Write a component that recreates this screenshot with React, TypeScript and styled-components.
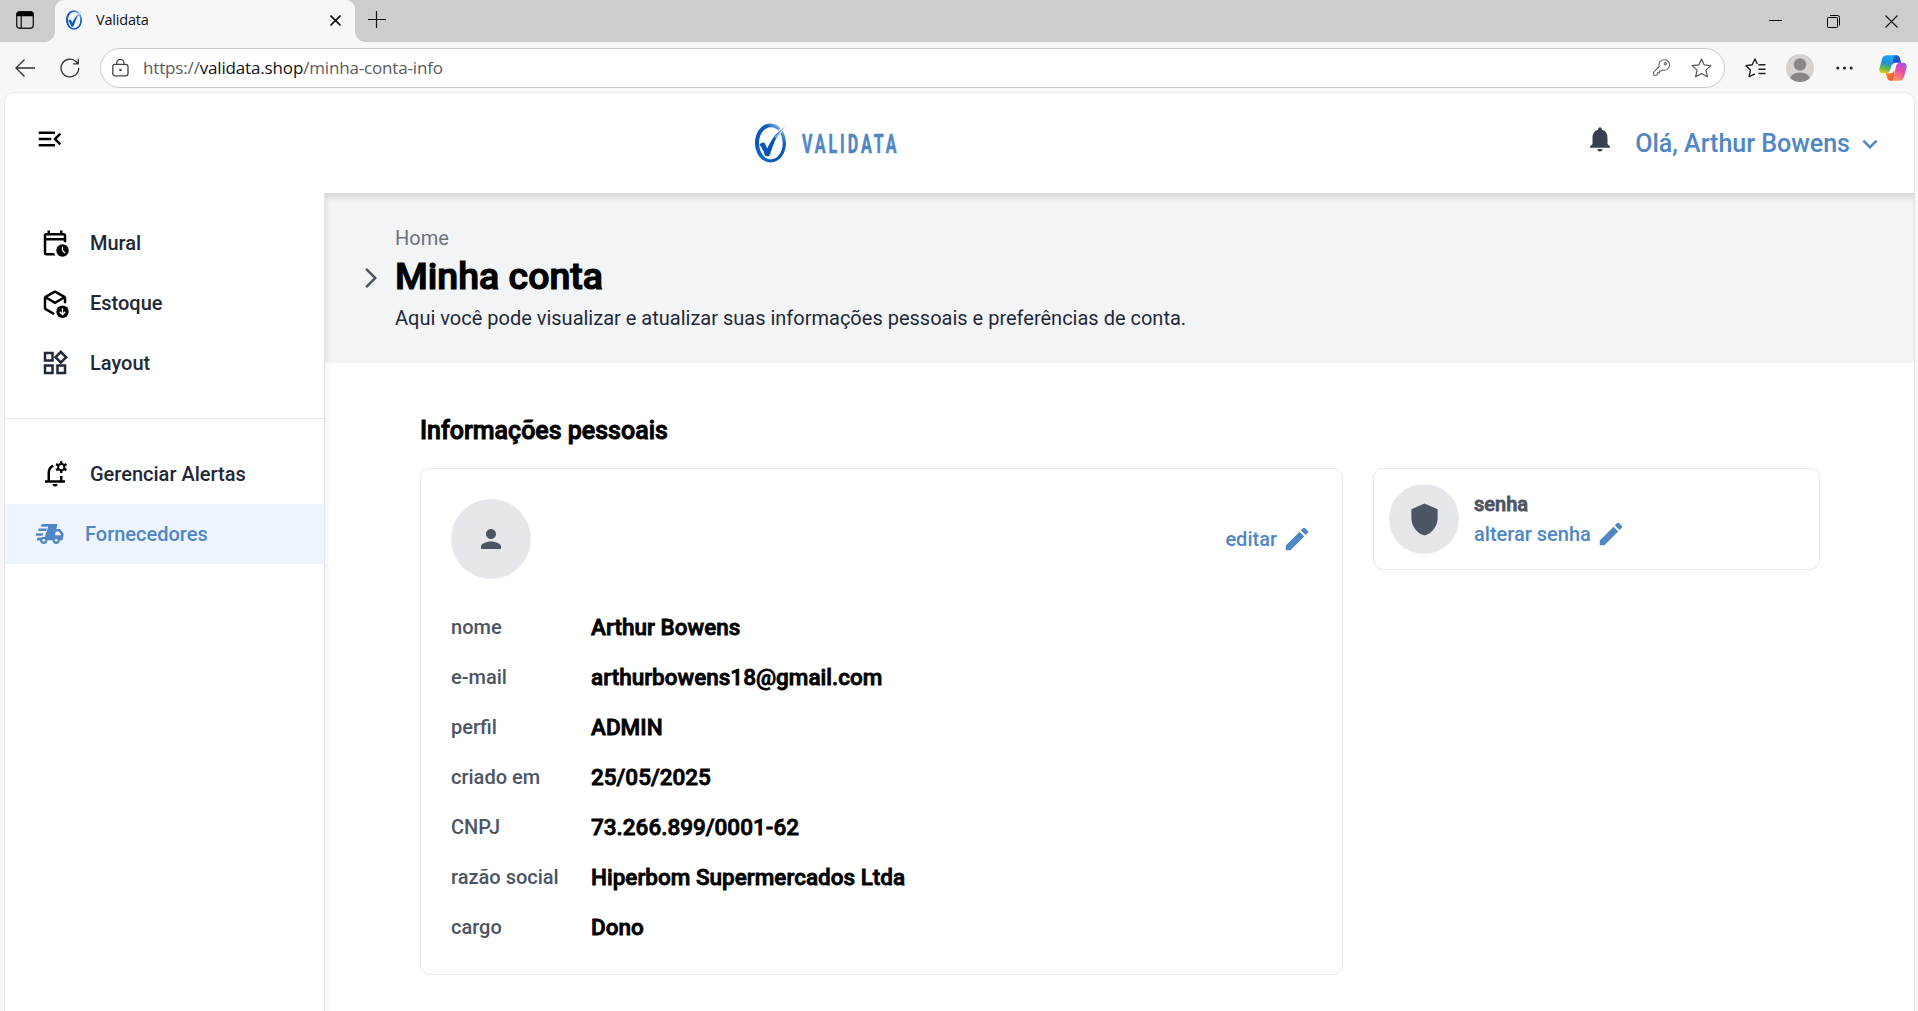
import React from "react";
import styled, { createGlobalStyle } from "styled-components";
import {
  MdMenuOpen,
  MdNotifications,
  MdKeyboardArrowDown,
  MdOutlineWidgets,
  MdArrowForwardIos,
  MdPerson,
  MdEdit,
  MdShield,
} from "react-icons/md";

const blue = "#4f86c6";
const ink = "#1f2937";

const Global = createGlobalStyle`
  *, *::before, *::after { box-sizing: border-box; }
  html, body, #root { height: 100%; }
  body { margin: 0; overflow: hidden; background: #f7f7f7; font-family: Roboto, "Noto Sans", sans-serif; }
  h1, h2, p, dl, dd, dt, ul { margin: 0; padding: 0; }
  button { border: 0; background: none; padding: 0; font: inherit; color: inherit; }
  svg { display: block; flex: none; }
`;

const Window = styled.div`
  display: flex;
  flex-direction: column;
  height: 1011px;
  width: 1918px;
`;

/* ---------- browser chrome ---------- */

const TabStrip = styled.div`
  display: flex;
  align-items: stretch;
  height: 42px;
  background: #cdcdcd;
`;

const TabActions = styled.div`
  width: 55px;
  padding: 11px 0 0 16px;
`;

const Tab = styled.div`
  position: relative;
  display: flex;
  align-items: center;
  width: 300px;
  padding: 0 14px 2px 11px;
  background: #f7f7f7;
  border-radius: 9px 9px 0 0;

  &::before,
  &::after {
    content: "";
    position: absolute;
    bottom: 0;
    width: 10px;
    height: 10px;
  }
  &::before {
    left: -10px;
    background: radial-gradient(circle at 0 0, transparent 9.5px, #f7f7f7 10px);
  }
  &::after {
    right: -10px;
    background: radial-gradient(circle at 100% 0, transparent 9.5px, #f7f7f7 10px);
  }
`;

const TabTitle = styled.span`
  flex: 1;
  margin-left: 14px;
  font-family: "Open Sans", "Noto Sans", sans-serif;
  font-size: 14.5px;
  letter-spacing: -0.2px;
  line-height: 20px;
  color: #111;
`;

const NewTab = styled.div`
  flex: 1;
  padding: 11px 0 0 13px;
`;

const WindowButtons = styled.div`
  display: flex;
  gap: 45px;
  padding: 15px 20px 0 0;
`;

const Toolbar = styled.div`
  display: flex;
  align-items: center;
  height: 51px;
  padding: 0 10px 0 15px;
`;

const NavButtons = styled.div`
  display: flex;
  align-items: center;
  gap: 25px;
  width: 85px;
`;

const AddressBar = styled.div`
  display: flex;
  align-items: center;
  width: 1625px;
  height: 40px;
  padding: 0 12px 0 11px;
  background: #fff;
  border: 1px solid #cbcbcb;
  border-radius: 20px;
`;

const Url = styled.span`
  flex: 1;
  margin: 0 0 0 14px;
  font-family: "Open Sans", "Noto Sans", sans-serif;
  font-size: 17px;
  letter-spacing: -0.16px;
  color: #5a5a5a;

  b {
    font-weight: 400;
    color: #111;
  }
`;

const AddressActions = styled.div`
  display: flex;
  align-items: center;
  gap: 21px;
`;

const ToolbarActions = styled.div`
  display: grid;
  flex: 1;
  grid-template-columns: 41px 50px 43px auto;
  align-items: center;
  padding-left: 20px;
`;

/* ---------- application ---------- */

const Page = styled.div`
  display: flex;
  flex: 1;
  flex-direction: column;
  margin: -1px 3px 0 4px;
  border: 1px solid #e6e6e6;
  border-bottom: 0;
  border-top-color: #ececec;
  border-radius: 10px 10px 0 0;
  overflow: hidden;
  background: #fff;
`;

const Header = styled.header`
  display: grid;
  grid-template-columns: 721px auto 1fr;
  align-items: center;
  height: 100px;
  flex: none;
  padding: 0 29px 0 29px;
`;

const MenuButton = styled.button`
  display: flex;
  align-self: start;
  margin: 31px 0 0 1px;
  color: #000;
`;

const Brand = styled.div`
  display: flex;
  align-items: center;
  gap: 16px;
`;

const BrandName = styled.span`
  width: 96px;
  margin-top: 3px;
  font-size: 25px;
  font-weight: 700;
  letter-spacing: 4.6px;
  line-height: 30px;
  white-space: nowrap;
  color: ${blue};
  -webkit-text-stroke: 0.5px ${blue};
  transform: scaleX(0.64);
  transform-origin: 0 50%;
`;

const UserArea = styled.div`
  display: flex;
  align-items: center;
  justify-content: flex-end;
  color: ${blue};
  font-size: 25px;
  font-weight: 500;
  line-height: 30px;
`;

const UserName = styled.span`
  padding-top: 2px;
`;

const Bell = styled(MdNotifications)`
  margin: -8px 20px 0 0;
  color: #374151;
`;

const Chevron = styled(MdKeyboardArrowDown)`
  margin: 1px 0 0 5px;
`;

const Body = styled.div`
  display: flex;
  flex: 1;
  min-height: 0;
`;

const Sidebar = styled.nav`
  z-index: 1;
  width: 320px;
  padding-top: 20px;
  background: #fff;
  border-right: 1px solid #e5e7eb;
  box-shadow: 0 5px 7px rgba(0, 0, 0, 0.1);
`;

const NavItem = styled.div<{ $active?: boolean }>`
  display: flex;
  align-items: center;
  gap: 20px;
  height: 60px;
  padding-left: ${(p) => (p.$active ? 30 : 35)}px;
  background: ${(p) => (p.$active ? "#eef5ff" : "transparent")};
  color: ${(p) => (p.$active ? blue : ink)};
  font-size: 20px;
  font-weight: 500;
`;

const Divider = styled.div`
  height: 1px;
  margin: 25px 0 25px;
  background: #e5e7eb;
`;

const Main = styled.main`
  display: flex;
  flex: 1;
  flex-direction: column;
`;

const Banner = styled.section`
  display: flex;
  align-items: center;
  gap: 12px;
  height: 170px;
  padding-left: 34px;
  background: #f2f4f6;
  box-shadow: inset 0 8px 8px -5px rgba(0, 0, 0, 0.17);
`;

const BannerArrow = styled(MdArrowForwardIos)`
  color: #4b5563;
`;

const Crumb = styled.p`
  font-size: 20px;
  line-height: 30px;
  color: #6b7280;
`;

const Title = styled.h1`
  padding-top: 1px;
  font-size: 37.5px;
  font-weight: 500;
  line-height: 45px;
  color: #000;
  -webkit-text-stroke: 1.2px #000;
`;

const Lead = styled.p`
  margin-top: 4px;
  font-size: 20px;
  line-height: 30px;
  color: ${ink};
`;

const Content = styled.section`
  padding: 50px 94px 0 95px;
`;

const SectionTitle = styled.h2`
  font-size: 25px;
  font-weight: 500;
  line-height: 35px;
  color: #000;
  -webkit-text-stroke: 0.9px #000;
`;

const Cards = styled.div`
  display: flex;
  align-items: flex-start;
  gap: 30px;
  margin-top: 20px;
`;

const Card = styled.div`
  border: 1px solid #e5e7eb;
  border-radius: 10px;
  background: #fff;
`;

const InfoCard = styled(Card)`
  width: 923px;
  height: 507px;
  padding: 30px;
`;

const PasswordCard = styled(Card)`
  display: flex;
  align-items: center;
  gap: 15px;
  width: 447px;
  height: 102px;
  padding: 15px;
`;

const Avatar = styled.div<{ $size: number }>`
  display: flex;
  flex: none;
  align-items: center;
  justify-content: center;
  width: ${(p) => p.$size}px;
  height: ${(p) => p.$size}px;
  border-radius: 50%;
  background: #e5e7eb;
  color: #4b5563;
`;

const InfoHead = styled.div`
  display: flex;
  align-items: center;
  justify-content: space-between;
`;

const EditLink = styled.button`
  display: flex;
  align-items: center;
  gap: 5px;
  color: ${blue};
  font-size: 20px;
  font-weight: 500;
  line-height: 30px;
`;

const Fields = styled.dl`
  display: grid;
  grid-template-columns: 140px 1fr;
  grid-auto-rows: 50px;
  align-items: center;
  margin-top: 23px;
`;

const Label = styled.dt`
  font-size: 20px;
  font-weight: 500;
  color: #4b5563;
`;

const Value = styled.dd`
  padding-bottom: 1px;
  font-size: 22.5px;
  font-weight: 500;
  color: #000;
  -webkit-text-stroke: 0.8px #000;
`;

const PasswordText = styled.div`
  display: flex;
  flex-direction: column;
`;

const PasswordLabel = styled.span`
  font-size: 20px;
  font-weight: 500;
  line-height: 30px;
  color: #4b5563;
  -webkit-text-stroke: 0.8px #4b5563;
`;

/* ---------- drawings ---------- */

const Logo = ({ w, h, id }: { w: number; h: number; id: string }) => (
  <svg width={w} height={h} viewBox="0 0 31 40" preserveAspectRatio="none">
    <defs>
      <linearGradient id={id} x1="0" y1="1" x2="0.8" y2="0">
        <stop offset="0" stopColor="#1a7fd6" />
        <stop offset="0.35" stopColor="#0a55b5" />
        <stop offset="0.75" stopColor="#0d5cbc" />
        <stop offset="1" stopColor="#9cc3ec" />
      </linearGradient>
    </defs>
    <path
      fill={`url(#${id})`}
      fillRule="evenodd"
      d="M15.5 0.5C24 0.5 31 9 31 20S24 39.5 15.5 39.5 0 31 0 20 7 0.5 15.5 .5ZM16 4.2C9 4.2 4 11.3 4 20S9 36.4 15.7 36.4 27.7 29.5 27.7 20.5 23 4.2 16 4.2Z"
    />
    <path d="M24 9.5 28.5 4.5" stroke="#fff" strokeWidth="3.4" />
    <path
      fill="#0a55b5"
      d="M4.5 22C5.5 19.5 8.5 18.5 9.8 20.3L12.2 25.5C16 17.5 20.5 10.5 26 7C21 14 18 22 15 31.5C14 34 10.8 34.2 9.8 31.8C8.5 28 7 24.5 4.5 22Z"
    />
    <path fill="#7fade2" d="M19.5 14.5C22.5 10 26 6 30.3 3C27 7 24 11 22 15.5Z" />
  </svg>
);

const TabActionsIcon = () => (
  <svg width="18" height="18" viewBox="0 0 18 18">
    <rect x="0.7" y="0.7" width="16.6" height="16.6" rx="3" fill="none" stroke="#222" strokeWidth="1.4" />
    <path d="M0.5 5.2V3.5A3 3 0 0 1 3.5.5h11a3 3 0 0 1 3 3V5.2Z" fill="#000" />
    <path d="M5.2 5v12" stroke="#222" strokeWidth="1.4" />
  </svg>
);

const CloseIcon = ({ s, w }: { s: number; w: number }) => (
  <svg width={s} height={s} viewBox={`0 0 ${s} ${s}`}>
    <path d={`M.5.5 ${s - 0.5} ${s - 0.5}M${s - 0.5}.5 .5 ${s - 0.5}`} stroke="#111" strokeWidth={w} />
  </svg>
);

const PlusIcon = () => (
  <svg width="18" height="18" viewBox="0 0 18 18">
    <path d="M8.5 0v17M0 8.5h18" stroke="#111" strokeWidth="1.2" />
  </svg>
);

const MinimizeIcon = () => (
  <svg width="13" height="12" viewBox="0 0 13 12">
    <path d="M0 5.5h13" stroke="#000" />
  </svg>
);

const RestoreIcon = () => (
  <svg width="13" height="13" viewBox="0 0 13 13" fill="none" stroke="#000">
    <rect x="0.5" y="2.5" width="10" height="10" rx="0.8" />
    <path d="M3 .5h7.5a2 2 0 0 1 2 2V10.5" />
  </svg>
);

const BackIcon = () => (
  <svg width="20" height="18" viewBox="0 0 20 18" fill="none" stroke="#333" strokeWidth="1.4">
    <path d="M20 9H1M9.5.5 1 9l8.5 8.5" />
  </svg>
);

const ReloadIcon = () => (
  <svg width="20" height="20" viewBox="0 0 21 21" fill="none" stroke="#333" strokeWidth="1.4">
    <path d="M19.7 10.5A9.3 9.3 0 1 1 17 4L19 6M19.2.7V6.2H13.5" />
  </svg>
);

const LockIcon = () => (
  <svg width="17" height="18" viewBox="0 0 17 18" fill="none" stroke="#444" strokeWidth="1.3">
    <rect x="0.8" y="5.3" width="15.2" height="11.5" rx="2.3" />
    <path d="M4.7 5V4a3.6 3.6 0 0 1 7.3 0v1" />
    <circle cx="8.4" cy="11" r="1.3" fill="#444" stroke="none" />
  </svg>
);

const KeyIcon = () => (
  <svg width="17" height="17" viewBox="0 0 17 17" fill="none" stroke="#666" strokeWidth="1.1">
    <path d="M11 .7a5.3 5.3 0 1 1-1.7 10.2L8.2 12H6.4v1.9H4.6L4 16.2H1.2A.6.6 0 0 1 .6 15.6V13.2L6.2 7.5A5.3 5.3 0 0 1 11 .7Z" />
    <circle cx="12.3" cy="4.7" r="1.1" />
  </svg>
);

const StarIcon = () => (
  <svg width="21" height="20" viewBox="0 0 21 20" fill="none" stroke="#555" strokeWidth="1.2" strokeLinejoin="round">
    <path d="M10.5 1 13.2 6.9 19.9 7.6 14.9 12.1 16.4 18.7 10.5 15.5 4.6 18.7 6.1 12.1 1.1 7.6 7.8 6.9Z" />
  </svg>
);

const FavoritesIcon = () => (
  <svg width="21" height="20" viewBox="0 0 21 20" fill="none" stroke="#222" strokeWidth="1.4" strokeLinejoin="round">
    <path d="M13.5 6.8H20.5M13.5 11.2H20.5M13.5 15.5H20.5M12.3 6 10 1 7.2 6.8 .9 7.7 5.4 12.1 4.1 18.7 10 15.8" />
  </svg>
);

const ProfileIcon = () => (
  <svg width="28" height="28" viewBox="0 0 28 28">
    <defs>
      <clipPath id="face">
        <circle cx="14" cy="14" r="14" />
      </clipPath>
    </defs>
    <g clipPath="url(#face)">
      <rect width="28" height="28" fill="#d4d1ce" />
      <circle cx="14" cy="10.5" r="6.2" fill="#8b8684" />
      <ellipse cx="14" cy="26" rx="10.5" ry="7.5" fill="#8b8684" />
    </g>
  </svg>
);

const DotsIcon = () => (
  <svg width="17" height="4" viewBox="0 0 17 4" fill="#222">
    <circle cx="1.8" cy="2" r="1.5" />
    <circle cx="8.5" cy="2" r="1.5" />
    <circle cx="15.2" cy="2" r="1.5" />
  </svg>
);

const CopilotIcon = () => (
  <svg width="28" height="26" viewBox="0 0 28 26">
    <defs>
      <linearGradient id="cpA" x1="0.4" y1="0" x2="0.15" y2="1">
        <stop offset="0" stopColor="#1aa5f0" />
        <stop offset="0.4" stopColor="#1d8fd6" />
        <stop offset="0.68" stopColor="#5cb85a" />
        <stop offset="1" stopColor="#f4cf10" />
      </linearGradient>
      <linearGradient id="cpB" x1="0.8" y1="0" x2="0.3" y2="1">
        <stop offset="0" stopColor="#a152ee" />
        <stop offset="0.45" stopColor="#ec4c9e" />
        <stop offset="1" stopColor="#ff9a5c" />
      </linearGradient>
      <linearGradient id="cpC" x1="0" y1="0" x2="1" y2="1">
        <stop offset="0" stopColor="#1470e0" />
        <stop offset="1" stopColor="#2f35b8" />
      </linearGradient>
      <linearGradient id="cpD" x1="0" y1="0" x2="1" y2="1">
        <stop offset="0" stopColor="#f9a21b" />
        <stop offset="1" stopColor="#ef4136" />
      </linearGradient>
    </defs>
    <path fill="url(#cpC)" d="M14 .3H17.5C19.5.3 20.4 1.4 21 3.4L22.2 7.8H16.8C14.5 7.8 13.5 9 12.8 11Z" />
    <path fill="url(#cpD)" d="M14.5 25.7H11.5C9.5 25.7 8.6 24.6 8 22.6L6.7 18.2H11.5C13.8 18.2 14.8 17 15.5 15Z" />
    <path fill="url(#cpA)" d="M8 .3H17.5C15.8.3 15 1.6 14.4 3.6L11.2 14.7C10.5 17.1 9.3 18.2 7 18.2H3.5C.6 18.2-.2 15.7.6 12.7L2.9 4.6C3.7 1.8 5.3.3 8 .3Z" />
    <path fill="url(#cpB)" d="M20 25.7H11.5C13.2 25.7 14 24.4 14.6 22.4L17 11.3C17.7 8.9 18.9 7.8 21.2 7.8H24.5C27.4 7.8 28.2 10.3 27.4 13.3L25.1 21.4C24.3 24.2 22.7 25.7 20 25.7Z" />
  </svg>
);

const CalendarClockIcon = () => (
  <svg width="30" height="30" viewBox="0 -960 960 960" fill="#000">
    <path d="M200-640h560v-80H200v80Zm0 560q-33 0-56.5-23.5T120-160v-560q0-33 23.5-56.5T200-800h40v-80h80v80h320v-80h80v80h40q33 0 56.5 23.5T840-720v227q-19-9-39-15t-41-9v-43H200v400h252q7 22 16.5 42T491-80H200Zm520 40q-83 0-141.5-58.5T520-240q0-83 58.5-141.5T720-440q83 0 141.5 58.5T920-240q0 83-58.5 141.5T720-40Zm67-105 28-28-75-75v-112h-40v128l87 87Z" />
  </svg>
);

const BoxDownIcon = () => (
  <svg width="30" height="30" viewBox="0 -960 960 960">
    <g fill="none" stroke="#000" strokeWidth="80">
      <path d="M800-470V-640Q800-663 780-675L500-836Q480-847 460-836L180-675Q160-663 160-640V-318Q160-296 180-284L452-127" />
      <path d="M175-665 480-488 785-665" />
    </g>
    <circle cx="720" cy="-200" r="198" fill="#000" />
    <path d="M720-310V-115M630-200 720-110 810-200" fill="none" stroke="#fff" strokeWidth="42" />
  </svg>
);

const BellGearIcon = () => (
  <svg width="30" height="30" viewBox="0 -960 960 960">
    <g fill="none" stroke="#000" strokeWidth="80">
      <path d="M160-240H800M280-240V-520Q280-680 424-750M680-420V-240" />
      <circle cx="680" cy="-700" r="100" strokeWidth="62" />
      {[0, 60, 120, 180, 240, 300].map((a) => (
        <path key={a} d="M680-818V-892" strokeWidth="74" transform={`rotate(${a} 680 -700)`} />
      ))}
    </g>
    <path d="M400-160H560A80 80 0 0 1 400-160Z" />
  </svg>
);

const TruckIcon = () => (
  <svg width="30" height="30" viewBox="0 -960 960 960">
    <g fill={blue}>
      <path d="M228-800H720L683-640H800L920-480 880-280H800Q800-230 765-195T680-160 595-195 560-280H400Q400-230 365-195T280-160 195-195 160-280H70L120-480Z" />
    </g>
    <g fill="#eef5ff">
      <path d="M665-560H760L834-461 830-440H637Z" />
      <path d="M50-760H232L222-720H420L372-534H350L324-386H220L212-360H40Z" />
      <circle cx="280" cy="-280" r="42" />
      <circle cx="680" cy="-280" r="42" />
    </g>
    <g fill={blue}>
      <path d="M182-720 190-752Q205-800 264-800H420L380-720Z" />
      <path d="M100-573 120-653H380L360-573Z" />
      <path d="M20-427 40-507H260L240-427Z" />
      <path d="M78-360H220V-280H60Z" />
    </g>
  </svg>
);

const fields: [string, string][] = [
  ["nome", "Arthur Bowens"],
  ["e-mail", "arthurbowens18@gmail.com"],
  ["perfil", "ADMIN"],
  ["criado em", "25/05/2025"],
  ["CNPJ", "73.266.899/0001-62"],
  ["razão social", "Hiperbom Supermercados Ltda"],
  ["cargo", "Dono"],
];

export default function App() {
  return (
    <Window>
      <Global />
      <TabStrip>
        <TabActions>
          <TabActionsIcon />
        </TabActions>
        <Tab>
          <Logo w={16} h={20} id="logoTab" />
          <TabTitle>Validata</TabTitle>
          <CloseIcon s={11} w={1.6} />
        </Tab>
        <NewTab>
          <PlusIcon />
        </NewTab>
        <WindowButtons>
          <MinimizeIcon />
          <RestoreIcon />
          <CloseIcon s={13} w={1.1} />
        </WindowButtons>
      </TabStrip>

      <Toolbar>
        <NavButtons>
          <BackIcon />
          <ReloadIcon />
        </NavButtons>
        <AddressBar>
          <LockIcon />
          <Url>
            https://<b>validata.shop</b>/minha-conta-info
          </Url>
          <AddressActions>
            <KeyIcon />
            <StarIcon />
          </AddressActions>
        </AddressBar>
        <ToolbarActions>
          <FavoritesIcon />
          <ProfileIcon />
          <DotsIcon />
          <CopilotIcon />
        </ToolbarActions>
      </Toolbar>

      <Page>
        <Header>
          <MenuButton aria-label="Menu">
            <MdMenuOpen size={30} />
          </MenuButton>
          <Brand>
            <Logo w={31} h={40} id="logoMain" />
            <BrandName>VALIDATA</BrandName>
          </Brand>
          <UserArea>
            <Bell size={30} />
            <UserName>Olá, Arthur Bowens</UserName>
            <Chevron size={30} />
          </UserArea>
        </Header>

        <Body>
          <Sidebar>
            <NavItem>
              <CalendarClockIcon />
              Mural
            </NavItem>
            <NavItem>
              <BoxDownIcon />
              Estoque
            </NavItem>
            <NavItem>
              <MdOutlineWidgets size={30} />
              Layout
            </NavItem>
            <Divider />
            <NavItem>
              <BellGearIcon />
              Gerenciar Alertas
            </NavItem>
            <NavItem $active>
              <TruckIcon />
              Fornecedores
            </NavItem>
          </Sidebar>

          <Main>
            <Banner>
              <BannerArrow size={24} />
              <div>
                <Crumb>Home</Crumb>
                <Title>Minha conta</Title>
                <Lead>Aqui você pode visualizar e atualizar suas informações pessoais e preferências de conta.</Lead>
              </div>
            </Banner>

            <Content>
              <SectionTitle>Informações pessoais</SectionTitle>
              <Cards>
                <InfoCard>
                  <InfoHead>
                    <Avatar $size={80}>
                      <MdPerson size={30} />
                    </Avatar>
                    <EditLink>
                      editar
                      <MdEdit size={30} />
                    </EditLink>
                  </InfoHead>
                  <Fields>
                    {fields.map(([label, value]) => (
                      <React.Fragment key={label}>
                        <Label>{label}</Label>
                        <Value>{value}</Value>
                      </React.Fragment>
                    ))}
                  </Fields>
                </InfoCard>

                <PasswordCard>
                  <Avatar $size={70}>
                    <MdShield size={35} />
                  </Avatar>
                  <PasswordText>
                    <PasswordLabel>senha</PasswordLabel>
                    <EditLink>
                      alterar senha
                      <MdEdit size={30} />
                    </EditLink>
                  </PasswordText>
                </PasswordCard>
              </Cards>
            </Content>
          </Main>
        </Body>
      </Page>
    </Window>
  );
}
